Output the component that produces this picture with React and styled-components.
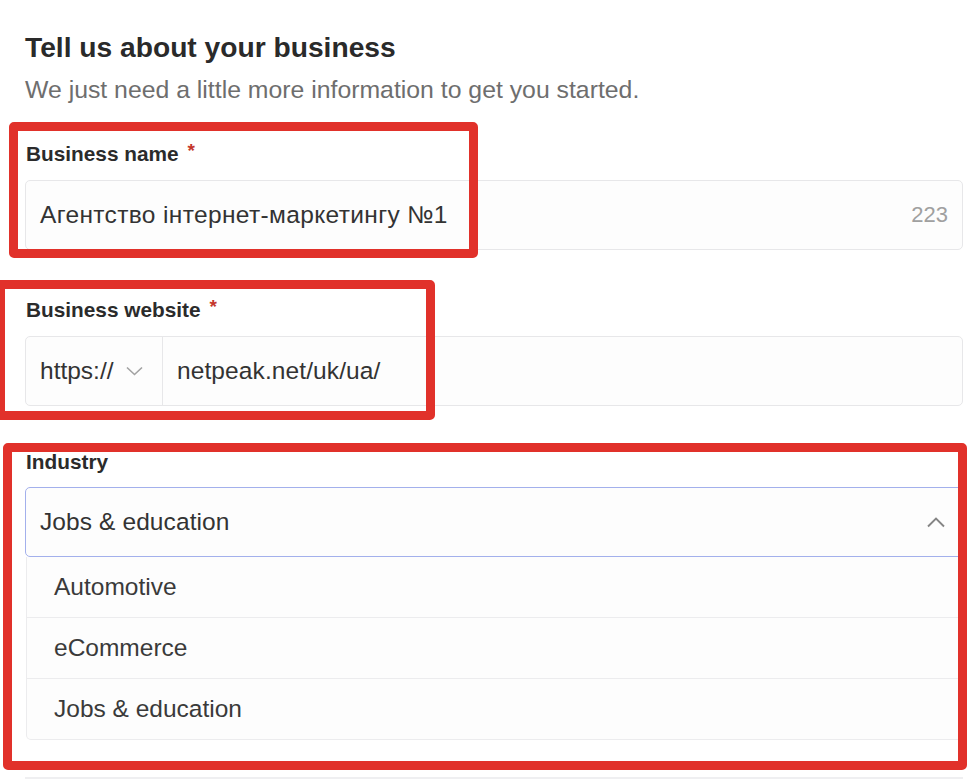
import styled, { createGlobalStyle } from "styled-components";

const GlobalStyle = createGlobalStyle`
  html, body {
    margin: 0;
    padding: 0;
    background: #ffffff;
  }
  body {
    font-family: "Liberation Sans", Arial, Helvetica, sans-serif;
    color: #2b2b2b;
  }
`;

const Page = styled.div`
  position: relative;
  width: 971px;
  height: 783px;
  overflow: hidden;
  background: #ffffff;
`;

const Form = styled.div`
  padding: 31px 8px 0 25px;
`;

const Title = styled.h1`
  margin: 0;
  font-size: 28.2px;
  line-height: 32px;
  font-weight: 700;
  color: #2a2a2a;
`;

const Subtitle = styled.p`
  margin: 12px 0 0;
  font-size: 24.8px;
  line-height: 30px;
  color: #6e6e6e;
`;

const Field = styled.div`
  margin-top: ${(props) => props.$top}px;
`;

const Label = styled.div`
  font-size: 20.8px;
  line-height: 26px;
  font-weight: 700;
  color: #2b2b2b;
  margin-bottom: 12px;
  padding-left: 1px;
`;

const Required = styled.span`
  color: #c4372c;
  margin-left: 9px;
  font-size: 19px;
  position: relative;
  top: -4px;
`;

const Box = styled.div`
  display: flex;
  align-items: center;
  height: 70px;
  box-sizing: border-box;
  border: 1px solid ${(props) => (props.$focused ? "#a3b0ec" : "#e7e7e9")};
  border-radius: 5px;
  background: #fdfdfd;
  font-size: 24.5px;
  color: #333333;
`;

const Value = styled.span`
  flex: 1;
  padding-left: 14px;
  white-space: nowrap;
  letter-spacing: ${(props) => props.$spacing || 0}px;
`;

const Counter = styled.span`
  font-size: 22px;
  color: #a0a0a0;
  padding-right: 14px;
`;

const Prefix = styled.div`
  display: flex;
  align-items: center;
  height: 100%;
  width: 137px;
  box-sizing: border-box;
  padding-left: 14px;
  border-right: 1px solid #e7e7e9;
  gap: 12px;
`;

const Chevron = styled.svg`
  flex: none;
  margin-right: ${(props) => props.$right || 0}px;
`;

const Options = styled.div`
  margin-left: 1px;
  border: 1px solid #ececee;
  border-top: none;
  border-radius: 0 0 5px 5px;
  background: #fdfdfd;
`;

const Option = styled.div`
  height: 60px;
  display: flex;
  align-items: center;
  padding-left: 27px;
  font-size: 24.5px;
  color: #3a3a3a;
  border-bottom: ${(props) => (props.$last ? "none" : "1px solid #ececee")};
`;

const Divider = styled.div`
  margin-top: 37px;
  height: 2px;
  background: #efeff1;
`;

const Highlight = styled.div`
  position: absolute;
  box-sizing: border-box;
  border: 9.5px solid #e1312a;
  border-radius: 5px;
  pointer-events: none;
`;

const industries = ["Automotive", "eCommerce", "Jobs & education"];

const App = () => {
  return (
    <Page>
      <GlobalStyle />
      <Form>
        <Title>Tell us about your business</Title>
        <Subtitle>We just need a little more information to get you started.</Subtitle>

        <Field $top={36}>
          <Label>
            Business name<Required>*</Required>
          </Label>
          <Box>
            <Value $spacing={0.35}>Агентство інтернет-маркетингу №1</Value>
            <Counter>223</Counter>
          </Box>
        </Field>

        <Field $top={47}>
          <Label>
            Business website<Required>*</Required>
          </Label>
          <Box>
            <Prefix>
              https://
              <Chevron width="17" height="10" viewBox="0 0 17 10">
                <polyline points="1,1.5 8.5,8.5 16,1.5" fill="none" stroke="#a2a2a2" strokeWidth="1.6" />
              </Chevron>
            </Prefix>
            <Value $spacing={0.1}>netpeak.net/uk/ua/</Value>
          </Box>
        </Field>

        <Field $top={43}>
          <Label>Industry</Label>
          <Box $focused>
            <Value $spacing={0.1}>Jobs &amp; education</Value>
            <Chevron width="18" height="11" viewBox="0 0 18 11" $right={17}>
              <polyline points="1,9.5 9,1.5 17,9.5" fill="none" stroke="#858585" strokeWidth="1.9" />
            </Chevron>
          </Box>
          <Options>
            {industries.map((item, i) => (
              <Option key={item} $last={i === industries.length - 1}>
                {item}
              </Option>
            ))}
          </Options>
        </Field>
        <Divider />
      </Form>

      <Highlight style={{ left: 9, top: 122, width: 469, height: 136 }} />
      <Highlight style={{ left: -4, top: 280, width: 439, height: 140 }} />
      <Highlight style={{ left: 3, top: 443, width: 964, height: 327 }} />
    </Page>
  );
};

export default App;
